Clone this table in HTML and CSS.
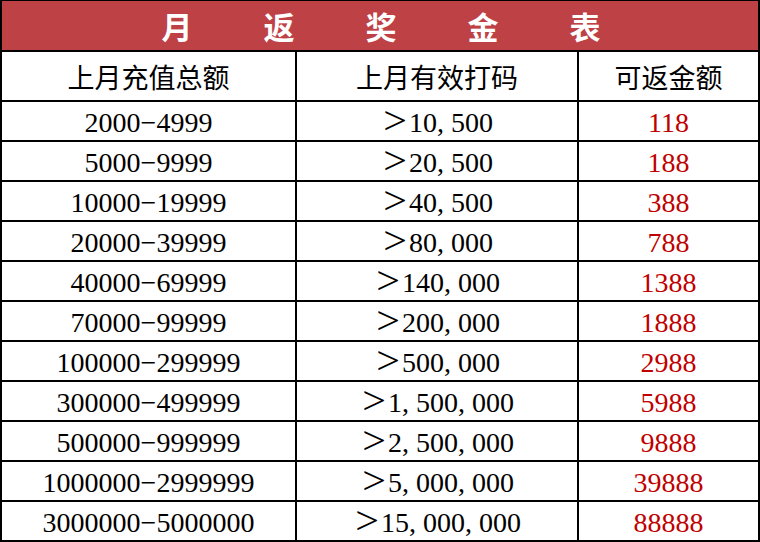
FILE: index.html
```html
<!DOCTYPE html>
<html lang="zh-CN">
<head>
<meta charset="utf-8">
<title>月返奖金表</title>
<link rel="stylesheet" href="styles.css">
</head>
<body>
<div class="sheet">
  <div class="title"><span>月</span><span>返</span><span>奖</span><span>金</span><span>表</span></div>
  <div class="grid">
    <div class="cell head">上月充值总额</div>
    <div class="cell head">上月有效打码</div>
    <div class="cell head last">可返金额</div>

    <div class="cell">2000−4999</div><div class="cell"><span class="gt">&gt;</span>10, 500</div><div class="cell red last">118</div>
    <div class="cell">5000−9999</div><div class="cell"><span class="gt">&gt;</span>20, 500</div><div class="cell red last">188</div>
    <div class="cell">10000−19999</div><div class="cell"><span class="gt">&gt;</span>40, 500</div><div class="cell red last">388</div>
    <div class="cell">20000−39999</div><div class="cell"><span class="gt">&gt;</span>80, 000</div><div class="cell red last">788</div>
    <div class="cell">40000−69999</div><div class="cell"><span class="gt">&gt;</span>140, 000</div><div class="cell red last">1388</div>
    <div class="cell">70000−99999</div><div class="cell"><span class="gt">&gt;</span>200, 000</div><div class="cell red last">1888</div>
    <div class="cell">100000−299999</div><div class="cell"><span class="gt">&gt;</span>500, 000</div><div class="cell red last">2988</div>
    <div class="cell">300000−499999</div><div class="cell"><span class="gt">&gt;</span>1, 500, 000</div><div class="cell red last">5988</div>
    <div class="cell">500000−999999</div><div class="cell"><span class="gt">&gt;</span>2, 500, 000</div><div class="cell red last">9888</div>
    <div class="cell">1000000−2999999</div><div class="cell"><span class="gt">&gt;</span>5, 000, 000</div><div class="cell red last">39888</div>
    <div class="cell bottom">3000000−5000000</div><div class="cell bottom"><span class="gt">&gt;</span>15, 000, 000</div><div class="cell red last bottom">88888</div>
  </div>
</div>
</body>
</html>
```

FILE: styles.css
```css
html, body {
  margin: 0;
  padding: 0;
  background: #fff;
}

.sheet {
  width: 760px;
  height: 542px;
  box-sizing: border-box;
  border: 2px solid #000;
  border-top-width: 1px;
  display: flex;
  flex-direction: column;
  font-family: "Liberation Serif", "Noto Sans CJK SC", serif;
  color: #000;
}

.title {
  height: 51px;
  box-sizing: border-box;
  border-bottom: 2px solid #000;
  background: #be4146;
  color: #fff;
  font-family: "Noto Sans CJK SC", sans-serif;
  font-weight: 700;
  font-size: 31px;
  display: flex;
  justify-content: center;
  align-items: center;
  gap: 71px;
  padding-left: 2px;
}

.grid {
  flex: 1;
  display: grid;
  grid-template-columns: 295px 282px 1fr;
  grid-template-rows: 50px repeat(10, 40px) 38px;
}

.cell {
  box-sizing: border-box;
  border-right: 2px solid #000;
  border-bottom: 2px solid #000;
  display: flex;
  align-items: center;
  justify-content: center;
  font-size: 28px;
  padding-top: 4px;
  white-space: nowrap;
}

.cell.head {
  font-family: "Noto Sans CJK SC", sans-serif;
  font-size: 27px;
  padding-top: 0;
}

.cell.last {
  border-right: none;
}

.cell.bottom {
  border-bottom: none;
}

.cell.red {
  color: #c00000;
}

.gt {
  display: inline-block;
  width: 1em;
  text-align: center;
  transform: scale(1.5, 1.4) translateY(-1px);
}
```
